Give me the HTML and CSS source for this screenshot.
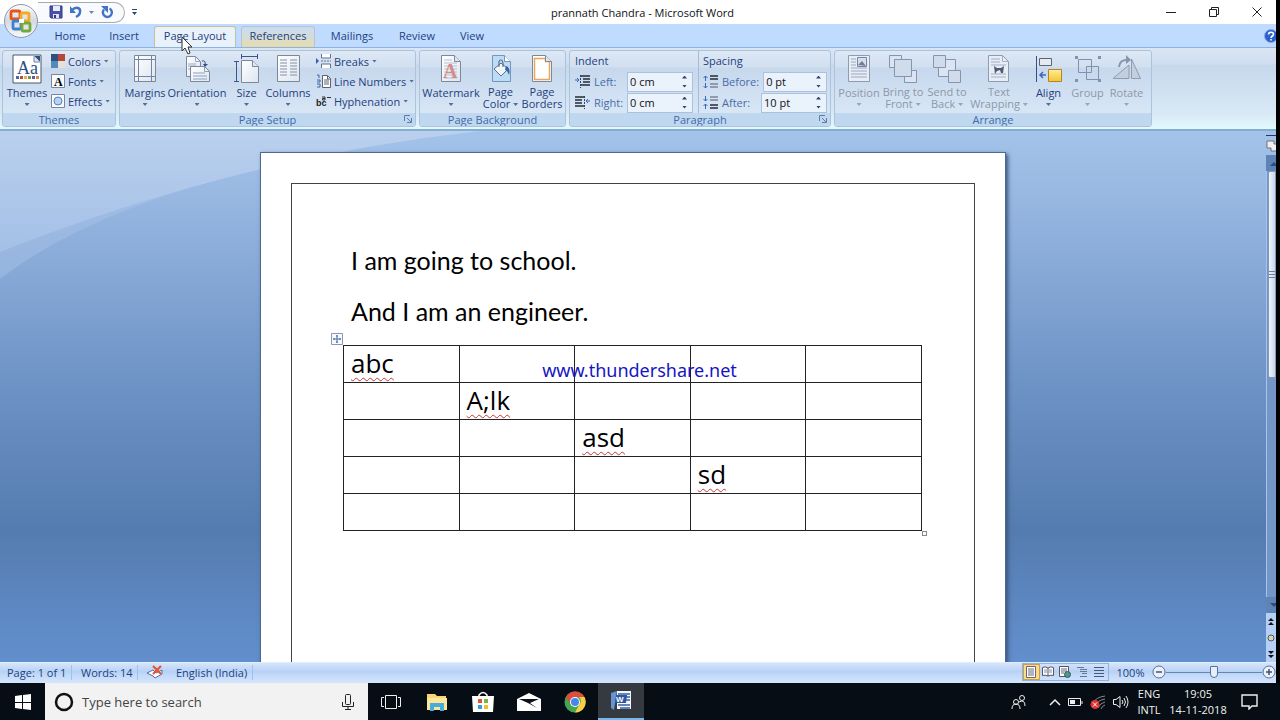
FILE: index.html
```html
<!DOCTYPE html>
<html lang="en">
<head>
	<meta charset="UTF-8">
	<title>prannath Chandra - Microsoft Word</title>
	<link rel="stylesheet" href="styles.css">
</head>
<body>
<svg class="defs" width="0" height="0" aria-hidden="true">
	<defs>
		<linearGradient id="paper" x1="0" y1="0" x2="1" y2="1"><stop offset="0" stop-color="#fff"/><stop offset="1" stop-color="#dde5f0"/></linearGradient>
		<linearGradient id="orb" x1="0" y1="0" x2="0" y2="1"><stop offset="0" stop-color="#fdfdfe"/><stop offset=".5" stop-color="#d5d9e2"/><stop offset="1" stop-color="#f8f9fb"/></linearGradient>
		<linearGradient id="sky" x1="0" y1="0" x2="0" y2="1"><stop offset="0" stop-color="#bad0ee"/><stop offset="1" stop-color="#a3c0e6"/></linearGradient>
		<linearGradient id="yellow" x1="0" y1="0" x2="0" y2="1"><stop offset="0" stop-color="#ffeb9a"/><stop offset="1" stop-color="#f2c733"/></linearGradient>
	</defs>
</svg>
<div class="window">
	<header class="titlebar">
		<div class="quick">
			<button aria-label="Save"><svg width="14" height="14" viewBox="0 0 14 14"><path d="M1 1h12v12H2l-1-1z" fill="#4a50a8" stroke="#343a86"/><path d="M4 1h7v5H4z" fill="#e8ecfa"/><path d="M4 9h6v4H4z" fill="#dfe4f4"/><path d="M5 10h2v3H5z" fill="#343a86"/></svg></button>
			<button aria-label="Undo"><svg width="14" height="14" viewBox="0 0 14 14"><path d="M3 5c4-4 9-2 8 2 0 2-2 4-4 5" fill="none" stroke="#4373c4" stroke-width="2.4"/><path d="M1 1v7h6z" fill="#4373c4"/></svg></button>
			<button aria-label="Undo list"><svg width="5" height="3" viewBox="0 0 5 3"><path d="M0 0h5L2.500 3z" fill="#6c86b0"/></svg></button>
			<button aria-label="Repeat"><svg width="14" height="14" viewBox="0 0 14 14"><path d="M9.500 3.500a4.500 4.500 0 1 1-5.500 1" fill="none" stroke="#4373c4" stroke-width="2.400"/><path d="M1 1h7v7z" fill="#4373c4"/></svg></button>
		</div>
		<button class="customize" aria-label="Customize toolbar"><svg width="5" height="6" viewBox="0 0 5 6"><path d="M0 0h5v1H0zM0 3h5L2.500 6z" fill="#30476f"/></svg></button>
		<h1>prannath Chandra - Microsoft Word</h1>
		<div class="controls">
			<button aria-label="Minimize"><svg width="10" height="10"><path d="M0 5.500h10" stroke="#222"/></svg></button>
			<button aria-label="Restore"><svg width="10" height="10" fill="none" stroke="#222"><path d="M.5 2.500h7v7h-7zM2.500 2.500v-2h7v7h-2"/></svg></button>
			<button aria-label="Close"><svg width="10" height="10"><path d="M.5.5l9 9M9.500.5l-9 9" stroke="#222"/></svg></button>
		</div>
		<button class="office" aria-label="Office button"><svg width="36" height="36" viewBox="0 0 36 36"><circle cx="18" cy="18" r="16.500" fill="url(#orb)" stroke="#8f98a8"/><g fill="none" stroke-width="2.800"><rect x="8" y="8" width="9" height="8" rx="1.500" stroke="#e2571e"/><rect x="18" y="10" width="8" height="8" rx="1.500" stroke="#f2ab22"/><rect x="10" y="18" width="8" height="8" rx="1.500" stroke="#3d82cc"/><rect x="19" y="20" width="8" height="8" rx="1.500" stroke="#74aa3c"/></g><path d="M16 16h5v4h-5z" fill="#fff"/></svg></button>
	</header>

	<nav class="tabs">
		<a href="#" class="tab home">Home</a>
		<a href="#" class="tab insert">Insert</a>
		<a href="#" class="tab active">Page Layout</a>
		<a href="#" class="tab hover">References</a>
		<a href="#" class="tab mailings">Mailings</a>
		<a href="#" class="tab review">Review</a>
		<a href="#" class="tab view">View</a>
		<button class="help" aria-label="Help"><svg width="14" height="14" viewBox="0 0 14 14"><circle cx="7" cy="7" r="6.500" fill="#2860d0" stroke="#8ea8d8"/><path d="M4.500 5.500C4.500 2.500 9.500 2.500 9.500 5.300 9.500 7 7 7 7 9M7 10v1.600" fill="none" stroke="#fff" stroke-width="1.600"/></svg></button>
	</nav>

	<section class="ribbon">
		<div class="group themes">
			<div class="tools">
				<button class="big"><svg width="30" height="30" viewBox="0 0 30 30"><path d="M1 1h28v28H1z" fill="#fff" stroke="#4d596e"/><path d="M22 2h6v6z" fill="#2c4f8b"/><path d="M22 2v6h6" fill="#dbe5f2" stroke="#7687a3"/><text x="5" y="20" class="aa">Aa</text><path d="M4 22h3v3H4z" fill="#476a9f"/><path d="M8 22h3v3H8z" fill="#b74c43"/><path d="M12 22h3v3h-3z" fill="#eaac44"/><path d="M16 22h3v3h-3z" fill="#75964b"/><path d="M20 22h3v3h-3z" fill="#6a5794"/><path d="M24 22h3v3h-3z" fill="#e4843e"/></svg><span>Themes</span><i></i></button>
				<div class="stack">
					<button><svg width="14" height="14"><path d="M0 0h14v14H0z" fill="#fff"/><path d="M0 0h7v7H0z" fill="#31507e"/><path d="M7 0h7v7H7z" fill="#b8473b"/><path d="M0 7h7v7H0z" fill="#5689bb"/><path d="M7 7h7v7H7z" fill="#e3e1d8"/></svg><span>Colors</span><i></i></button>
					<button><svg width="14" height="14"><path d="M.5.5h13v13H.5z" fill="#f9fafc" stroke="#7787a2"/><text x="3" y="12" class="letter">A</text></svg><span>Fonts</span><i></i></button>
					<button><svg width="14" height="14"><path d="M.5.5h13v13H.5z" fill="#f9fafc" stroke="#7787a2"/><circle cx="7" cy="7" r="4" fill="#b6d3f3" stroke="#5482bf"/></svg><span>Effects</span><i></i></button>
				</div>
			</div>
			<h2>Themes</h2>
		</div>

		<div class="group setup">
			<div class="tools">
				<button class="big"><svg width="24" height="30" viewBox="0 0 24 30"><path d="M1.500 1.500h21v26h-21z" fill="url(#paper)" stroke="#7d8798"/><path d="M5.500 2v25M18.500 2v25M2 5.500h20M2 22.500h20" stroke="#6e86aa"/></svg><span>Margins</span><i></i></button>
				<button class="big wide"><svg width="28" height="30" viewBox="0 0 28 30"><path d="M3.500 2.500h9l5 5v15h-14z" fill="url(#paper)" stroke="#7d8798"/><path d="M12.500 2.500v5h5M5 10h8M5 12h8M5 15h5" fill="none" stroke="#9aaac2"/><path d="M7.500 12.500h14l5 5v10h-19z" fill="url(#paper)" stroke="#7d8798"/><path d="M21.500 12.500v5h5M10 19h12M10 22h14M10 25h14" fill="none" stroke="#8fa0ba"/><path d="M19 7q4-1 3 4" fill="none" stroke="#334f83"/><path d="M20 10h5l-3 3z" fill="#334f83"/></svg><span>Orientation</span><i></i></button>
				<button class="big slim"><svg width="26" height="30" viewBox="0 0 26 30"><path d="M7.500 6.500h11l6 6v16h-17z" fill="url(#paper)" stroke="#7d8798"/><path d="M18.500 6.500v6h6" fill="#dce6f4" stroke="#7d8798"/><path d="M7 2.500h17M7.500 0v5M23.500 0v5M2.500 7v21M0 7.500h5M0 27.500h5" stroke="#3c568b"/></svg><span>Size</span><i></i></button>
				<button class="big"><svg width="24" height="30" viewBox="0 0 24 30"><path d="M1.500 1.500h22v26h-22z" fill="url(#paper)" stroke="#7d8798"/><path d="M4 6h7M4 9h7M4 12h7M4 15h7M4 18h7M4 21h7M14 6h7M14 9h7M14 12h7M14 15h7M14 18h7M14 21h7" stroke="#8290a7"/></svg><span>Columns</span><i></i></button>
				<div class="stack">
					<button><svg width="15" height="14"><path d="M5.500 0v4h9V0M5.500 14v-4h9v4" fill="#fff" stroke="#5d7198"/><path d="M5 7h10" stroke="#5d7198" stroke-dasharray="2 1"/><path d="M0 4l3 3-3 3z" fill="#345fae"/></svg><span>Breaks</span><i></i></button>
					<button><svg width="15" height="14"><path d="M6.500 1.500h5l3 3v9h-8z" fill="#fff" stroke="#5a6474"/><path d="M8 6h5M8 8h5M8 10h5M11.500 2v3h3" fill="none" stroke="#5a6474"/><path d="M1 1h2v3M1 6h3v2H1M1 10h3v3H1" fill="none" stroke="#3f65a4"/></svg><span>Line Numbers</span><i></i></button>
					<button><svg width="15" height="14"><text x="0" y="12" class="hyph">bc</text><path d="M6 3h3v3H6.500V4.500H9M11 3.500h4" fill="none" stroke="#333"/></svg><span>Hyphenation</span><i></i></button>
				</div>
			</div>
			<h2>Page Setup</h2>
			<button class="launcher" aria-label="Page Setup options"><svg width="8" height="8"><path d="M.5 6V.5H6M3 3l4 4M7.500 3v4.500H3" fill="none" stroke="#5f7ca9"/></svg></button>
		</div>

		<div class="group backdrop">
			<div class="tools">
				<button class="big wide"><svg width="24" height="30" viewBox="0 0 24 30"><path d="M2.500 1.500h13l6 6v20h-19z" fill="url(#paper)" stroke="#7d8798"/><path d="M15.500 1.500v6h6" fill="#dce6f4" stroke="#7d8798"/><path d="M5 6h8M5 9h13M5 12h13M5 15h13M5 18h13M5 21h13M5 24h13" stroke="#b7c0ce"/><text x="4" y="24" class="mark">A</text></svg><span>Watermark</span><i></i></button>
				<button class="big two slim"><svg width="24" height="30" viewBox="0 0 24 30"><path d="M3.500 1.500h12l6 6v20h-18z" fill="#bcdcf6" stroke="#7596b8"/><path d="M15.500 1.500v6h6" fill="#fff" stroke="#7596b8"/><path d="M5 15l7-6 7 6-7 7z" fill="#f1f4f8" stroke="#5c6f88"/><path d="M10 13V7q3-3 4 2v4" fill="none" stroke="#4d5f78"/><path d="M17 12q5 2 3 9-2-5-4-5z" fill="#3265a9"/></svg><span>Page<br>Color <i></i></span></button>
				<button class="big two"><svg width="24" height="30" viewBox="0 0 24 30"><path d="M2.500 1.500h13l6 6v20h-19z" fill="#fff" stroke="#7d8798"/><path d="M4.500 4.500h11v3h4v18h-15z" fill="none" stroke="#e8a55b" stroke-width="1.500"/><path d="M15.500 1.500v6h6" fill="#e1e7ef" stroke="#7d8798"/></svg><span>Page<br>Borders</span></button>
			</div>
			<h2>Page Background</h2>
		</div>

		<div class="group paragraph">
			<div class="fields">
				<div class="pane">
					<h3>Indent</h3>
					<div class="field"><svg width="15" height="14"><path d="M6 1h9M8 4h7M8 7h7M6 10h9" stroke="#252c3a" stroke-width="1.500"/><path d="M0 5h4M2 3l2 2-2 2" fill="none" stroke="#336bc0"/><path d="M5.500 0v13" stroke="#345" stroke-dasharray="2 1"/></svg><label for="left">Left:</label><div class="spin"><input id="left" type="text" value="0 cm"><button aria-label="Left up"></button><button aria-label="Left down"></button></div></div>
					<div class="field"><svg width="15" height="14"><path d="M0 1h9M0 4h7M0 7h7M0 10h9" stroke="#252c3a" stroke-width="1.500"/><path d="M15 5h-4M13 3l-2 2 2 2" fill="none" stroke="#336bc0"/><path d="M9.500 0v13" stroke="#345" stroke-dasharray="2 1"/></svg><label for="right">Right:</label><div class="spin"><input id="right" type="text" value="0 cm"><button aria-label="Right up"></button><button aria-label="Right down"></button></div></div>
				</div>
				<div class="pane">
					<h3>Spacing</h3>
					<div class="field"><svg width="15" height="14"><path d="M7 1h8M7 4h8" stroke="#252c3a" stroke-width="1.500"/><path d="M7 9h8M7 12h8" stroke="#7c8797" stroke-width="1.500"/><path d="M2.500 6V1M.5 3l2-2 2 2M2.500 8v5M.5 11l2 2 2-2" fill="none" stroke="#336bc0"/></svg><label for="before">Before:</label><div class="spin"><input id="before" type="text" value="0 pt"><button aria-label="Before up"></button><button aria-label="Before down"></button></div></div>
					<div class="field"><svg width="15" height="14"><path d="M7 1h8M7 4h8" stroke="#7c8797" stroke-width="1.500"/><path d="M7 9h8M7 12h8" stroke="#252c3a" stroke-width="1.500"/><path d="M2.500 0v5M.5 3l2 2 2-2M2.500 13V8M.5 10l2-2 2 2" fill="none" stroke="#336bc0"/></svg><label for="after">After:</label><div class="spin"><input id="after" type="text" value="10 pt"><button aria-label="After up"></button><button aria-label="After down"></button></div></div>
				</div>
			</div>
			<h2>Paragraph</h2>
			<button class="launcher" aria-label="Paragraph options"><svg width="8" height="8"><path d="M.5 6V.5H6M3 3l4 4M7.500 3v4.500H3" fill="none" stroke="#5f7ca9"/></svg></button>
		</div>

		<div class="group arrange">
			<div class="tools">
				<button class="big off"><svg width="24" height="30" viewBox="0 0 24 30"><path d="M1.500 1.500h21v26h-21z" fill="#e7edf7" stroke="#8f9bb1"/><path d="M4 5h5M4 8h5M4 11h5M4 14h16M4 17h16M4 20h16M4 23h16" stroke="#9ba8be"/><path d="M10.500 3.500h9v9h-9z" fill="#d5deeb" stroke="#76849c"/><path d="M11 11l4-4 4 5z" fill="#6f7f98"/></svg><span>Position</span><i></i></button>
				<button class="big two off"><svg width="28" height="30" viewBox="0 0 28 30"><g fill="#dbe4f2" stroke="#8694b0"><path d="M.5 1.500h12v12H.5zM15.500 16.500h12v12h-12z"/><path d="M5.500 5.500h17v17h-17z" fill="#d0dbec"/></g></svg><span>Bring to<br>Front <i></i></span></button>
				<button class="big two off"><svg width="28" height="30" viewBox="0 0 28 30"><g fill="#dbe4f2" stroke="#8694b0"><path d="M5.500 5.500h17v17h-17z"/><path d="M.5 1.500h12v12H.5zM15.500 16.500h12v12h-12z" fill="#d0dbec"/></g></svg><span>Send to<br>Back <i></i></span></button>
				<button class="big two wide off"><svg width="24" height="30" viewBox="0 0 24 30"><path d="M1.500 1.500h14l6 6v20h-20z" fill="#e7edf7" stroke="#8f9bb1"/><path d="M15.500 1.500v6h6M4 5h9M4 8h9M4 11h15M4 20h15M4 23h15" fill="none" stroke="#a3afc3"/><path d="M7 12l3 2h4l3-2-1 7h-2l-1-3-3 1-2 3z" fill="#4f5b70"/></svg><span>Text<br>Wrapping <i></i></span></button>
				<button class="big slim"><svg width="28" height="30" viewBox="0 0 28 30"><path d="M1.500 2v26" stroke="#334f92"/><path d="M4.500 4.500h12v7h-12z" fill="#e6eaf1" stroke="#586479"/><path d="M13.500 15.500h13v12h-13z" fill="url(#yellow)" stroke="#b28424"/><path d="M11 21H5m3-3-3 3 3 3" fill="none" stroke="#3e66bb" stroke-width="1.500"/></svg><span>Align</span><i></i></button>
				<button class="big slim off"><svg width="26" height="30" viewBox="0 0 26 30"><g fill="none" stroke="#8190ad"><path d="M3.500 5.500h13v13h-13zM11.500 12.500h12v13h-12z"/></g><path d="M0 2h3v3H0zM23 2h3v3h-3zM0 25h3v3H0zM23 25h3v3h-3z" fill="#8291ad"/></svg><span>Group</span><i></i></button>
				<button class="big slim off"><svg width="28" height="30" viewBox="0 0 28 30"><path d="M0 24.500L16 11v13.500zM18.500 5v19.500h9z" fill="#c3cedf" stroke="#8d9bb3"/><path d="M6 13q1-8 9-7" fill="none" stroke="#8594b1" stroke-width="2"/><path d="M13 1l5 5-5 4z" fill="#8594b1"/></svg><span>Rotate</span><i></i></button>
			</div>
			<h2>Arrange</h2>
		</div>
	</section>

	<main class="workspace">
		<svg class="swoosh" width="480" height="160" viewBox="0 0 480 160" aria-hidden="true"><path d="M0 0h480Q140 40 0 148z" fill="#a9c4e8" fill-opacity=".45"/><path d="M0 0h480Q240 26 0 121z" fill="url(#sky)"/></svg>
		<article class="page">
			<div class="border">
				<p>I am going to school.</p>
				<p>And I am an engineer.</p>
				<div class="sheet">
					<svg class="move" width="12" height="12"><path d="M.5.5h11v11H.5z" fill="#f7f9fd" stroke="#8a98b5"/><path d="M6 2v8M2 6h8M5 3h2M5 9h2M3 5v2M9 5v2" stroke="#4b6ca8"/></svg>
					<table>
						<tr><td><span>abc</span></td><td></td><td></td><td></td><td></td></tr>
						<tr><td></td><td><span>A;lk</span></td><td></td><td></td><td></td></tr>
						<tr><td></td><td></td><td><span>asd</span></td><td></td><td></td></tr>
						<tr><td></td><td></td><td></td><td><span>sd</span></td><td></td></tr>
						<tr><td></td><td></td><td></td><td></td><td></td></tr>
					</table>
					<div class="watermark">www.thundershare.net</div>
					<div class="resize"></div>
				</div>
			</div>
		</article>
		<div class="scrollbar">
			<button class="ruler" aria-label="Ruler"><svg width="12" height="14"><path d="M1 1h7v3h3v7H5V8H1z" fill="#f2efee" stroke="#6d7180"/></svg></button>
			<button class="up" aria-label="Scroll up"><svg width="8" height="5"><path d="M0 5l4-4 4 4z" fill="#2f4b77"/></svg></button>
			<div class="track"><div class="thumb"><svg width="6" height="7"><path d="M0 .5h6M0 3.500h6M0 6.500h6" stroke="#6c7f9e"/></svg></div></div>
			<button class="down" aria-label="Scroll down"><svg width="8" height="5"><path d="M0 0h8L4 4z" fill="#2f4b77"/></svg></button>
			<div class="browse">
				<button aria-label="Previous page"><svg width="6" height="7"><path d="M0 3l3-3 3 3zM0 7l3-3 3 3z" fill="#111"/></svg></button>
				<button aria-label="Browse object"><svg width="8" height="8"><circle cx="4" cy="4" r="3" fill="#d8d8b8" stroke="#555"/></svg></button>
				<button aria-label="Next page"><svg width="6" height="7"><path d="M0 0h6L3 3zM0 4h6L3 7z" fill="#111"/></svg></button>
			</div>
		</div>
	</main>

	<footer class="status">
		<span class="pages">Page: 1 of 1</span>
		<span class="words">Words: 14</span>
		<svg width="17" height="14" viewBox="0 0 17 14"><path d="M1 8l6-3 3 3 6-3v4l-7 4-2-2z" fill="#fff" stroke="#506ca5"/><path d="M7 1l8 8M15 1L7 9" stroke="#e6512f" stroke-width="2"/></svg>
		<span class="language">English (India)</span>
		<div class="views">
			<button class="on" aria-label="Print layout"><svg width="12" height="12"><path d="M1.500.5h9v11h-9z" fill="#fff" stroke="#667"/><path d="M3 3h6M3 5h6M3 7h6M3 9h6" stroke="#667"/></svg></button>
			<button aria-label="Full screen reading"><svg width="12" height="12"><path d="M.5 1.500Q3 0 6 2q3-2 5.500-.5v8Q9 8.500 6 10 3 8.500.5 9.500zM6 2v8" fill="#fff" stroke="#556"/><path d="M2 4h3M2 6h3M7 4h3M7 6h3" stroke="#889"/></svg></button>
			<button aria-label="Web layout"><svg width="12" height="12"><path d="M.5.5h9v10h-9z" fill="#fff" stroke="#556"/><path d="M2 3h6M2 5h6M2 7h3" stroke="#667"/><circle cx="8.500" cy="8.500" r="3" fill="#4b9b83" stroke="#357"/></svg></button>
			<button aria-label="Outline"><svg width="12" height="12"><path d="M1 1.500h7M4 3.500h7M4 5.500h7M6 7.500h5M4 10.500h7" stroke="#667694"/></svg></button>
			<button aria-label="Draft"><svg width="12" height="12"><path d="M1 1.500h10M1 4.500h10M1 7.500h10M1 10.500h10" stroke="#44577d"/></svg></button>
		</div>
		<span class="percent">100%</span>
		<button aria-label="Zoom out"><svg width="14" height="14"><circle cx="7" cy="7" r="6" fill="#e9f1fc" stroke="#586f98"/><path d="M4 7h6" stroke="#44526c" stroke-width="1.500"/></svg></button>
		<input class="zoom" type="range" min="0" max="100" value="50" aria-label="Zoom">
		<button class="plus" aria-label="Zoom in"><svg width="14" height="14"><circle cx="7" cy="7" r="6" fill="#e9f1fc" stroke="#586f98"/><path d="M4 7h6M7 4v6" stroke="#44526c" stroke-width="1.500"/></svg></button>
	</footer>
	<svg class="pointer" width="13" height="20" viewBox="0 0 13 20" aria-hidden="true"><path d="M1 1v14l3-3 3 6 2-1-2-6h4z" fill="#fff" stroke="#333"/></svg>
</div>

<div class="taskbar">
	<button class="start" aria-label="Start"><svg width="16" height="16"><path d="M0 2l7-1v7H0zM8 1l8-1v8H8zM0 9h7v6l-7-1zM8 9h8v7l-8-1z" fill="#fff"/></svg></button>
	<div class="search">
		<svg width="20" height="20"><circle cx="10" cy="10" r="8" fill="none" stroke="#111" stroke-width="2.500"/></svg>
		<input type="text" placeholder="Type here to search" aria-label="Type here to search">
		<svg width="12" height="16" fill="none" stroke="#222"><rect x="3.500" y=".5" width="5" height="10" rx="1"/><path d="M.5 8v4.500h11V8M6 12v3M3 15.500h6"/></svg>
	</div>
	<button class="app" aria-label="Task view"><svg width="20" height="14" fill="none" stroke="#eee"><path d="M4.500.5h11v13h-11zM3 2.500H.5v9H3M17 2.500h2.500v9H17"/></svg></button>
	<button class="app" aria-label="File Explorer"><svg width="22" height="18"><path d="M1 1h8l2 2h9v14H1z" fill="#f7d575"/><path d="M1 5h20v12H1z" fill="#fde59a"/><path d="M4 10h14v8h-4v-4H8v4H4z" fill="#43aedb"/></svg></button>
	<button class="app" aria-label="Store"><svg width="22" height="22"><path d="M7 6V4q4-5 8 0v2" fill="none" stroke="#fff" stroke-width="1.500"/><path d="M0 5h22l-1 16H1z" fill="#fff"/><path d="M6 8h4v4H6z" fill="#e85228"/><path d="M12 8h4v4h-4z" fill="#7ab63c"/><path d="M6 14h4v4H6z" fill="#2ba2db"/><path d="M12 14h4v4h-4z" fill="#f6bc2c"/></svg></button>
	<button class="app" aria-label="Mail"><svg width="24" height="18"><path d="M0 6l12-6 12 6v12H0z" fill="#fff"/><path d="M2 6h20l-9 4 7 5-9-5z" fill="#0b1118"/></svg></button>
	<button class="app" aria-label="Chrome"><svg width="22" height="22" viewBox="0 0 22 22"><circle cx="11" cy="11" r="10.500" fill="#43a653"/><path d="M2 6A10.500 10.500 0 0 1 20.500 6H11a5 5 0 0 0-4.400 7.500z" fill="#df4b3d"/><path d="M20.500 6A10.500 10.500 0 0 1 11 21.500l4.400-8A5 5 0 0 0 15 6z" fill="#f9cf42"/><circle cx="11" cy="11" r="5" fill="#fff"/><circle cx="11" cy="11" r="4" fill="#4a86e8"/></svg></button>
	<button class="app current" aria-label="Word"><svg width="22" height="22"><path d="M7 1h14v18H7z" fill="#f4f7fc"/><path d="M8 4h12M8 15h12M10 18h10M16 7h4M16 10h4" stroke="#395f9d" stroke-width="1.500"/><path d="M1 3l6-2-3 19-3-2z" fill="#6794cf"/><path d="M6 5h11l-1 8H5z" fill="#2d58a3"/><text x="6" y="12" class="w">W</text></svg></button>
	<div class="tray">
		<svg class="people" width="16" height="16" fill="none" stroke="#eee"><circle cx="11" cy="4" r="2.500"/><circle cx="5" cy="8" r="2.500"/><path d="M1 15q0-5 4-5t4 5M8 8q6-3 6 4"/></svg>
		<svg width="12" height="8"><path d="M1 7l5-5 5 5" fill="none" stroke="#eee" stroke-width="1.500"/></svg>
		<svg width="15" height="10"><path d="M.5 1.500h12v7H.5zM14 4v3" fill="none" stroke="#eee"/><path d="M2 3h5v4H2z" fill="#eee"/></svg>
		<svg width="16" height="14"><g fill="none" stroke="#888"><path d="M2 9Q6 2 15 1M5 11Q8 5 15 4M8 13q2-5 7-6M11 14q1-3 4-4"/></g><circle cx="5" cy="9.500" r="4.500" fill="#dc3331"/><path d="M3 7.500l4 4M7 7.500l-4 4" stroke="#fff"/></svg>
		<svg width="16" height="14" fill="none" stroke="#eee"><path d="M.5 4.500H3l4-3v11l-4-3H.5zM9 5q2 2 0 4M11 3q3 4 0 8M13 1q4 6 0 12"/></svg>
		<div class="lang">ENG<br>INTL</div>
		<div class="clock">19:05<br>14-11-2018</div>
		<svg width="17" height="16"><path d="M1 1h15v11h-5l-3 3v-3H1z" fill="none" stroke="#eee" stroke-width="1.400"/></svg>
	</div>
</div>
</body>
</html>
```
FILE: styles.css
```css
*{
	box-sizing: border-box;
}
body{
	margin: 0;
	height: 100vh;
	display: flex;
	flex-direction: column;
	overflow: hidden;
	background: #000;
	font-family: "Open Sans", "Noto Sans", sans-serif;
	font-size: 11px;
	color: #1e3f7d;
}
button,input{
	font: inherit;
	color: inherit;
	border: 0;
	padding: 0;
	background: none;
}
h1,h2,h3,p{
	margin: 0;
	font-weight: normal;
	font-size: inherit;
}
a{
	color: inherit;
	text-decoration: none;
}
svg{
	display: block;
	flex: none;
}
.defs{
	position: absolute;
}
.window{
	position: relative;
	flex: 1;
	min-height: 0;
	margin-right: 4px;
	display: flex;
	flex-direction: column;
	overflow: hidden;
	background: #bfdbff;
}

/* title bar */
.titlebar{
	height: 24px;
	display: flex;
	align-items: center;
	padding: 0 14px 0 38px;
	background: #fff;
	color: #111;
}
.quick{
	display: flex;
	align-items: center;
	gap: 6px;
	width: 87px;
	height: 21px;
	padding-left: 11px;
	border: 1px solid #a5a9b1;
	border-left: 0;
	border-radius: 0 11px 11px 0;
	background: #f9fafd;
}
.customize{
	margin-left: 7px;
}
.titlebar h1{
	flex: 1;
	text-align: center;
	padding-right: 18px;
}
.controls{
	display: flex;
	gap: 33px;
}
.office{
	position: absolute;
	left: 3px;
	top: 3px;
	z-index: 2;
}

/* tabs */
.tabs{
	height: 23px;
	display: flex;
	align-items: flex-end;
	padding-left: 42px;
	background: #bfdbff;
}
.tab{
	height: 21px;
	line-height: 20px;
	text-align: center;
	width: 56px;
}
.tab.insert{
	width: 52px;
}
.tab.active{
	width: 82px;
	margin-left: 4px;
	border: 1px solid #c5c09b;
	border-bottom: 0;
	border-radius: 3px 3px 0 0;
	background: #e9f1fb;
	line-height: 18px;
}
.tab.hover{
	width: 74px;
	margin: 0 5px;
	border: 1px solid #b8c3cf;
	border-bottom: 0;
	border-radius: 3px 3px 0 0;
	background: linear-gradient(#c8dcf1, #d5dcd8 50%, #e8dba8);
	line-height: 18px;
}
.tab.mailings{
	width: 64px;
}
.tab.review{
	width: 66px;
}
.tab.view{
	width: 44px;
}
.help{
	margin-left: auto;
	margin-right: -2px;
	padding-bottom: 4px;
}

/* ribbon */
.ribbon{
	height: 84px;
	display: flex;
	gap: 3px;
	padding: 2px;
	border-top: 1px solid #8db2e3;
	border-bottom: 2px solid #83aed2;
	background: linear-gradient(#dbe6f4, #d0def0 16px, #c7d8ed 17px, #d8e8f5 65px, #e3fafd);
}
.group{
	position: relative;
	display: flex;
	flex-direction: column;
	flex: none;
	border: 1px solid #a9c4dc;
	border-radius: 3px;
	overflow: hidden;
	background: linear-gradient(#dee8f5, #d1dff0 16px, #c7d8ed 17px, #d9e7f6 65px);
}
.group h2{
	flex: none;
	height: 13px;
	line-height: 13px;
	text-align: center;
	background: #c0d8ef;
	color: #3e6aaa;
}
.themes{
	width: 114px;
}
.setup{
	width: 297px;
}
.backdrop{
	width: 147px;
}
.paragraph{
	width: 262px;
}
.arrange{
	width: 318px;
}
.tools{
	flex: 1;
	min-height: 0;
	display: flex;
}
.big{
	width: 44px;
	display: flex;
	flex-direction: column;
	align-items: center;
	padding-top: 3px;
	line-height: 13px;
	white-space: nowrap;
}
.themes .big{
	width: 48px;
}
.big span{
	margin-top: 2px;
}
.big.two span{
	line-height: 12px;
}
.big.wide{
	width: 60px;
}
.big.slim{
	width: 39px;
}
.big i,.stack i{
	display: inline-block;
	width: 5px;
	height: 3px;
	background: #536e98;
	clip-path: polygon(0 0, 100% 0, 50% 100%);
}
.big > i{
	margin-top: 4px;
}
.big.two i{
	margin-bottom: 2px;
}
.off{
	color: #8d98a8;
}
.off i{
	background: #99a5b6;
}
.stack{
	display: flex;
	flex-direction: column;
}
.stack button{
	height: 20px;
	display: flex;
	align-items: center;
	gap: 3px;
	white-space: nowrap;
}
.setup .tools{
	padding-left: 3px;
}
.setup .stack{
	padding-left: 6px;
}
.backdrop .tools{
	padding-left: 1px;
}
.arrange .tools{
	padding-left: 2px;
}
.launcher{
	position: absolute;
	right: 3px;
	bottom: 3px;
}
.aa{
	font: 18px "Liberation Serif", serif;
	fill: #2d4e80;
}
.letter{
	font: bold 12px "Liberation Serif", serif;
}
.hyph{
	font: bold 9px "Liberation Sans", sans-serif;
	fill: #222;
}
.mark{
	font: bold 20px "Liberation Serif", serif;
	fill: #d58b8c;
}
.fields{
	flex: 1;
	display: flex;
}
.pane{
	width: 128px;
	padding: 0 5px;
}
.pane + .pane{
	flex: 1;
	border-left: 1px solid #a9bbd2;
	padding: 0 3px 0 4px;
}
.pane h3{
	height: 20px;
	line-height: 20px;
}
.field{
	height: 21px;
	display: flex;
	align-items: center;
	gap: 4px;
	color: #476da8;
}
.field label{
	flex: 1;
}
.spin{
	width: 66px;
	height: 20px;
	display: grid;
	grid-template-columns: 1fr 15px;
	justify-items: center;
	align-items: center;
	background: #eaf2fb;
	border: 1px solid #abc1de;
}
.spin input{
	grid-row: span 2;
	width: 100%;
	padding-left: 2px;
	color: #111;
}
.spin button{
	width: 5px;
	height: 3px;
	background: #30466f;
	clip-path: polygon(0 0, 100% 0, 50% 100%);
}
.spin button:nth-child(2){
	clip-path: polygon(50% 0, 100% 100%, 0 100%);
}

/* document */
.workspace{
	position: relative;
	flex: 1;
	min-height: 0;
	display: flex;
	overflow: hidden;
	background: linear-gradient(#a4c3ea, #98b8e2 12%, #7095c7 45%, #557cb0 75%, #628fcd);
}
.swoosh{
	position: absolute;
	left: 0;
	top: 0;
}
.page{
	position: relative;
	width: 746px;
	height: 1056px;
	margin: 21px auto 0;
	padding: 30px;
	background: #fff;
	border: 1px solid #50688a;
	box-shadow: 2px 2px 4px #39547e;
	color: #000;
}
.border{
	height: 996px;
	border: 1px solid #444;
	padding: 51px 52px 0 51px;
}
.border p{
	height: 51px;
	line-height: 51px;
	padding-left: 8px;
	font-family: Lato, sans-serif;
	font-size: 25px;
}
.sheet{
	position: relative;
	margin-top: 8px;
}
.sheet table{
	width: 100%;
	table-layout: fixed;
	border-collapse: collapse;
	font-size: 26px;
	line-height: 34px;
}
.sheet td{
	height: 37px;
	padding: 0 7px;
	border: 1px solid #222;
}
.sheet td span{
	display: block;
	width: fit-content;
	height: 36px;
	text-decoration: underline wavy #c5343a 1px;
	text-underline-offset: 4px;
}
.move{
	position: absolute;
	left: -12px;
	top: -12px;
}
.resize{
	position: absolute;
	right: -5px;
	bottom: -5px;
	width: 5px;
	height: 5px;
	border: 1px solid #888;
	background: #fff;
}
.watermark{
	position: absolute;
	top: 12px;
	left: 0;
	right: 0;
	padding-left: 14px;
	text-align: center;
	font-family: "Noto Sans", sans-serif;
	font-size: 18px;
	line-height: 26px;
	color: #1515c4;
}

/* scroll bar */
.scrollbar{
	position: relative;
	width: 10px;
	display: flex;
	flex-direction: column;
	padding-top: 4px;
	overflow: hidden;
}
.ruler{
	height: 20px;
	border-top: 1px solid #263b5d;
	padding-top: 3px;
}
.up,.down{
	height: 16px;
	padding-left: 4px;
	background: #5e83b6;
}
.track{
	flex: 1;
	padding-left: 1px;
	background: #7396c7;
	border-left: 1px solid #a9c4ec;
}
.thumb{
	height: 207px;
	display: flex;
	align-items: center;
	justify-content: center;
	border: 1px solid #8299bb;
	border-radius: 2px 0 0 2px;
	background: linear-gradient(90deg, #f1f4fa, #c8d5e9);
}
.browse{
	height: 49px;
	display: flex;
	flex-direction: column;
	align-items: center;
	justify-content: space-around;
	background: #b5cff5;
}

/* status bar */
.status{
	height: 21px;
	display: flex;
	align-items: center;
	padding: 0 0 2px 7px;
	border-top: 1px solid #e0efff;
	background: linear-gradient(#d6e5fb, #b6d0f5 45%, #bdd6f8 50%, #d5e6fd);
}
.pages{
	width: 65px;
	border-right: 1px solid #a5c0e7;
	white-space: nowrap;
}
.words{
	width: 66px;
	margin-right: 8px;
	padding-left: 9px;
	border-right: 1px solid #a5c0e7;
	white-space: nowrap;
}
.language{
	width: 90px;
	padding-left: 13px;
	border-right: 1px solid #a5c0e7;
	white-space: nowrap;
}
.views{
	display: flex;
	align-items: center;
	margin-left: auto;
	border: 1px solid #92b1dc;
}
.views button{
	width: 17px;
	height: 16px;
	padding-left: 2px;
}
.views .on{
	background: #ffd987;
	border: 1px solid #c5a157;
	padding-left: 1px;
}
.percent{
	width: 43px;
	text-align: center;
}
.zoom{
	appearance: none;
	flex: none;
	width: 96px;
	height: 14px;
	margin: 0;
	background: linear-gradient(#6785b4, #6785b4) center/100% 1px no-repeat;
}
.zoom::-webkit-slider-thumb{
	appearance: none;
	width: 8px;
	height: 12px;
	border: 1px solid #5a7099;
	border-radius: 1px 1px 4px 4px;
	background: #e6eefa;
}

.pointer{
	position: absolute;
	left: 181px;
	top: 36px;
}

/* taskbar */
.taskbar{
	height: 37px;
	display: flex;
	background: #070d14;
	color: #f1f1f1;
}
.start{
	width: 45px;
	display: flex;
	align-items: center;
	justify-content: center;
}
.search{
	width: 323px;
	display: flex;
	align-items: center;
	gap: 8px;
	padding: 0 14px 0 9px;
	background: #f2f2f2;
}
.search input{
	flex: 1;
	outline: 0;
	font-size: 13px;
}
.search input::placeholder{
	color: #444;
	opacity: 1;
}
.app{
	width: 46px;
	display: flex;
	align-items: center;
	justify-content: center;
}
.app.current{
	background: #343a40;
	border-bottom: 2px solid #76b9ed;
}
.w{
	font: bold 8px "Liberation Sans", sans-serif;
	fill: #fff;
}
.tray{
	margin-left: auto;
	padding-right: 22px;
	display: flex;
	align-items: center;
	gap: 7px;
	line-height: 16px;
	text-align: center;
}
.people{
	margin-right: 15px;
}
.lang{
	width: 26px;
}
.clock{
	width: 58px;
	margin-right: 7px;
	white-space: nowrap;
}
```
